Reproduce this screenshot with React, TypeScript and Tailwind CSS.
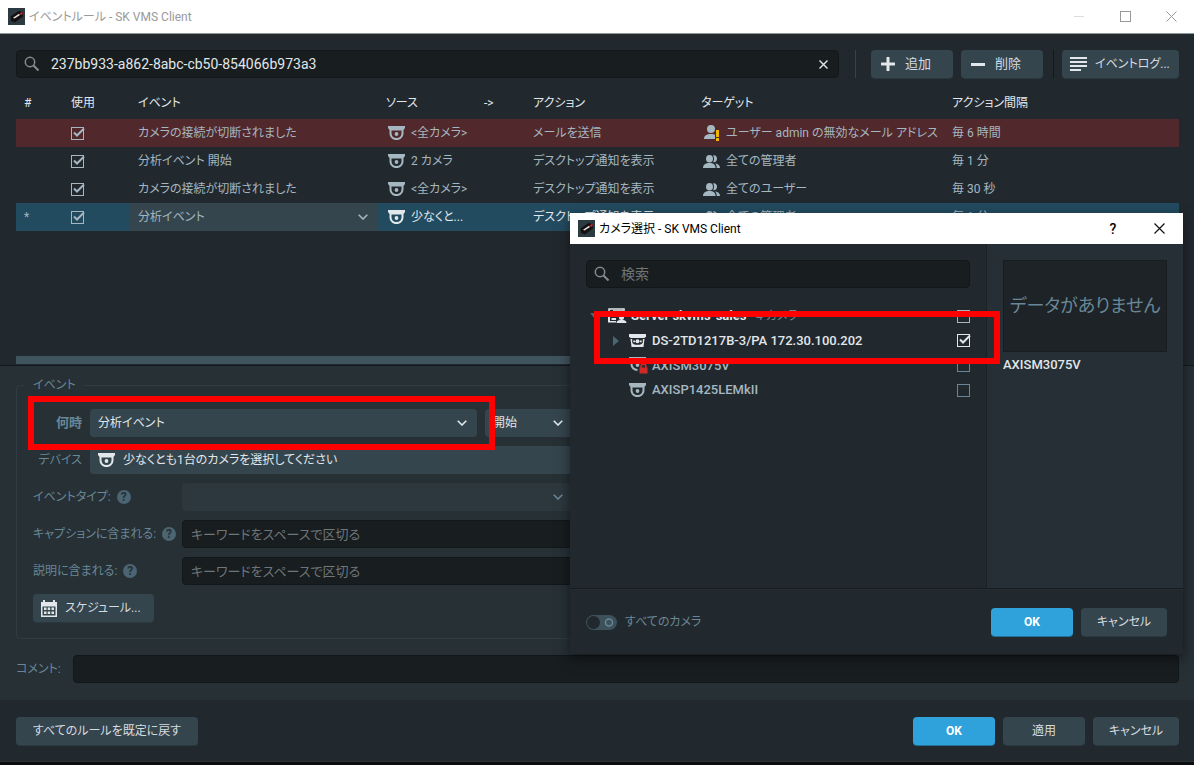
import type { ReactNode } from "react";
import { useState } from "react";

const btn = "flex h-7 items-center justify-center rounded-sm bg-[#35454d] text-[#d5dce0] shadow-[0_1px_0_#2b383f]";
const toolBtn = "flex h-7 items-center rounded-sm bg-[#35454d] text-[#d5dce0] shadow-[0_1px_0_#2b383f]";
const primaryBtn = "h-7 rounded-sm bg-[#2fa2db] font-bold text-white shadow-[0_1px_0_#25719a]";
const field = "h-7 min-w-0 rounded-sm border border-[#12171a] bg-[#181d1f] px-2 text-[#e1e7ea] placeholder:text-[#6f767a] outline-none";
const pick = "block h-7 w-full appearance-none rounded-sm bg-[#35454d] pr-7 pl-2 text-[#e1e7ea] outline-none";

const rules = [
  { mark: "", event: "カメラの接続が切断されました", source: "<全カメラ>", action: "メールを送信", target: "ユーザー admin の無効なメール アドレス", every: "毎 6 時間", state: "error" },
  { mark: "", event: "分析イベント 開始", source: "2 カメラ", action: "デスクトップ通知を表示", target: "全ての管理者", every: "毎 1 分", state: "" },
  { mark: "", event: "カメラの接続が切断されました", source: "<全カメラ>", action: "デスクトップ通知を表示", target: "全てのユーザー", every: "毎 30 秒", state: "" },
  { mark: "*", event: "分析イベント", source: "少なくと...", action: "デスクトップ通知を表示", target: "全ての管理者", every: "毎 1 分", state: "selected" },
];

function AppIcon() {
  return (
    <svg width="17" height="17" viewBox="0 0 17 17" className="shrink-0">
      <rect width="17" height="17" fill="#2c3a41" />
      <path d="M2.500 8.500 L10.500 3 L14.500 4 L15 8.500 L7 14.500 L3 13Z" fill="#141012" />
      <path d="M5 9.800 L11 5.800 L12 7 L6.500 10.500Z" fill="#e6e1df" />
      <path d="M12 5.200 L14.300 3.800 L14.500 6 L12.800 7Z" fill="#e0242c" />
    </svg>
  );
}

function SearchIcon() {
  return (
    <svg width="16" height="16" viewBox="0 0 16 16" fill="none" stroke="#858c90" className="absolute top-1.5 left-2">
      <circle cx="6" cy="6" r="4.700" strokeWidth="1.500" />
      <path d="M9.500 9.500 L14.500 14.500" strokeWidth="2" />
    </svg>
  );
}

function DomeIcon() {
  return (
    <svg width="17" height="14" viewBox="0 0 17 14" className="shrink-0">
      <path d="M0 0H17V2L15.500 4V7C15.500 11.300 12.500 14 8.500 14S1.500 11.300 1.500 7V4L0 2Z M3.500 4.500V7C3.500 10.200 5.500 12 8.500 12S13.500 10.200 13.500 7V4.500Z" fill="currentColor" fillRule="evenodd" />
      <circle cx="8.500" cy="8" r="1.900" fill="currentColor" />
    </svg>
  );
}

function LockedDomeIcon() {
  return (
    <svg width="19" height="17" viewBox="0 0 19 17" className="-mr-0.5 shrink-0">
      <path d="M0 0H17V2L15.500 4V6.500H13.500V4.500H3.500V7C3.500 10 5.500 11.800 8.500 12V14C4.500 14 1.500 11 1.500 7V4L0 2Z" fill="currentColor" />
      <circle cx="8.500" cy="8" r="1.900" fill="currentColor" />
      <path d="M12 11V9.800a2.500 2.500 0 0 1 5 0V11" fill="none" stroke="#cf2a2a" strokeWidth="1.600" />
      <rect x="10.500" y="10.500" width="8" height="6" fill="#cf2a2a" />
    </svg>
  );
}

function MultiCameraIcon() {
  return (
    <svg width="17" height="13" viewBox="0 0 17 13" className="shrink-0">
      <path d="M0 0H17V2.500L15.500 4H1.500L0 2.500Z" fill="currentColor" />
      <path d="M1.500 5H3.200V8.500C3.800 10 5.500 10.800 8.500 10.800S13.200 10 13.800 8.500V5H15.500L14.500 13H2.500Z" fill="currentColor" />
      <circle cx="8.500" cy="7.300" r="2" fill="currentColor" />
      <path d="M4.300 6.500h1.700v1.700H4.300zM11 6.500h1.700v1.700H11z" fill="currentColor" />
    </svg>
  );
}

function ServerIcon() {
  return (
    <svg width="19" height="15" viewBox="0 0 19 15" className="-mr-0.5 shrink-0">
      <rect x="1" y="1" width="15" height="5" fill="none" stroke="currentColor" strokeWidth="1.500" />
      <path d="M5 3.500h10" stroke="currentColor" strokeWidth="2.500" />
      <path d="M0 7.500H10V9H2V13H8V14.500H0Z" fill="currentColor" />
      <path d="M3.500 11H8" stroke="currentColor" strokeWidth="2" />
      <circle cx="13.500" cy="9.500" r="2.500" fill="currentColor" />
      <path d="M8.500 15C8.500 12.500 11 12 13.500 12S18.500 12.500 18.500 15Z" fill="currentColor" />
    </svg>
  );
}

function UserWarningIcon() {
  return (
    <svg width="17" height="16" viewBox="0 0 17 16" className="shrink-0">
      <circle cx="8" cy="4" r="4" fill="currentColor" />
      <path d="M1 14C1 10.500 3.500 9 8 9C10 9 11.300 9.300 12 9.800V14Z" fill="currentColor" />
      <path d="M13 5h3v7h-3zM13 13h3v3h-3z" fill="#f2b500" />
    </svg>
  );
}

function UsersIcon() {
  return (
    <svg width="17" height="13" viewBox="0 0 17 13" className="shrink-0">
      <ellipse cx="6.500" cy="3.800" rx="3.500" ry="3.800" fill="currentColor" />
      <path d="M0 13C0 9.500 2.500 8 6.500 8S12.500 9.500 12.500 13Z" fill="currentColor" />
      <path d="M10 0.200C13 -0.200 14.200 2 14 4C13.800 6.500 12 7.500 10 7.200C11.300 5.500 11.500 2.200 10 0.200ZM12 8.200C15.500 9 17 10.200 17 13H13.700C13.700 11 13.200 9.300 12 8.200Z" fill="currentColor" />
    </svg>
  );
}

function Chevron() {
  return (
    <svg width="10" height="6" viewBox="0 0 10 6" fill="none" stroke="currentColor" strokeWidth="1.600" className="pointer-events-none absolute top-1/2 right-2.5 -translate-y-1/2">
      <path d="M0.700 0.700 L5 5 L9.300 0.700" />
    </svg>
  );
}

function Check({ label, defaultChecked = false }: { label: string; defaultChecked?: boolean }) {
  return (
    <span className="relative block h-[13px] w-[13px]">
      <input type="checkbox" aria-label={label} defaultChecked={defaultChecked} className="peer block h-[13px] w-[13px] appearance-none border border-current" />
      <svg width="15" height="13" viewBox="0 0 15 13" fill="none" stroke="currentColor" strokeWidth="2" className="pointer-events-none absolute top-0 left-0 hidden peer-checked:block">
        <path d="M3 5.500 L6 8.500 L13 1.500" />
      </svg>
    </span>
  );
}

function Help() {
  return (
    <button aria-label="ヘルプ" className="h-3.5 w-3.5 rounded-full bg-[#4b6572] text-center text-xs leading-3.5 font-bold text-[#263035]">
      ?
    </button>
  );
}

function KeywordRow({ id, label, children }: { id: string; label: string; children: ReactNode }) {
  return (
    <div className="flex items-center">
      <div className="flex w-[149px] shrink-0 items-center gap-1.5 whitespace-nowrap">
        <label htmlFor={id}>{label}</label>
        <Help />
      </div>
      {children}
    </div>
  );
}

function CameraDialog() {
  return (
    <section role="dialog" aria-label="カメラ選択" className="absolute top-[213px] right-[11px] w-[613px] bg-[#22292e] shadow-[0_4px_12px_rgba(0,0,0,0.5)]">
      <header className="flex h-[31px] items-center bg-white pl-2 text-xs text-black">
        <AppIcon />
        <h2 className="ml-1 flex-1">カメラ選択 - SK VMS Client</h2>
        <button aria-label="ヘルプ" className="w-[46px] text-sm font-medium">?</button>
        <button aria-label="閉じる" className="flex w-[47px] justify-center">
          <svg width="11" height="11" viewBox="0 0 11 11" stroke="#111" strokeWidth="1.200">
            <path d="M0.500 0.500 L10.500 10.500 M10.500 0.500 L0.500 10.500" />
          </svg>
        </button>
      </header>
      <div className="flex h-[345px] border-b border-[#171c1f]">
        <div className="flex-1 px-4 pt-4">
          <div className="relative">
            <SearchIcon />
            <input aria-label="検索" placeholder="検索" className={`${field} w-full pl-[34px] text-sm`} />
          </div>
          <div className="relative mt-4 text-[13px] text-[#a5b7c0]">
            <ul>
              <li className="flex h-6 items-center gap-1.5 pl-1">
                <svg width="10" height="6" className="shrink-0"><path d="M0 0H10L5 6Z" fill="#4b6572" /></svg>
                <span className="flex flex-1 items-center gap-1.5 pl-0.5 text-[#e1e7ea]">
                  <ServerIcon />
                  <span><b className="font-bold">Server skvms-sales</b> <span className="text-xs text-[#698796]">- 4 カメラ</span></span>
                </span>
                <Check label="Server skvms-sales" />
              </li>
              <li className="flex h-[25px] items-center gap-2.5 pl-[27px] text-[#e1e7ea]">
                <svg width="6" height="10" className="shrink-0"><path d="M0 0V10L6 5Z" fill="#4b6572" /></svg>
                <span className="flex flex-1 items-center gap-1.5 font-medium">
                  <MultiCameraIcon />
                  DS-2TD1217B-3/PA 172.30.100.202
                </span>
                <Check label="DS-2TD1217B-3/PA" defaultChecked />
              </li>
              <li className="flex h-[25px] items-center pl-[43px] font-medium">
                <span className="flex flex-1 items-center gap-1.5"><LockedDomeIcon />AXISM3075V</span>
                <span className="text-[#698796]"><Check label="AXISM3075V" /></span>
              </li>
              <li className="flex h-6 items-center pl-[43px] font-medium">
                <span className="flex flex-1 items-center gap-1.5"><DomeIcon />AXISP1425LEMkII</span>
                <span className="text-[#698796]"><Check label="AXISP1425LEMkII" /></span>
              </li>
            </ul>
            <div className="pointer-events-none absolute top-[7px] -right-[30px] left-2 h-[53px] border-6 border-[#ff0000]" />
          </div>
        </div>
        <aside className="w-[197px] border-l border-[#1b2124] bg-[#262f35] p-4">
          <div className="flex h-[92px] items-center justify-center border border-[#181d20] bg-[#1d2326] text-lg whitespace-nowrap text-[#698796]">データがありません</div>
          <p className="mt-1 text-[13px] font-medium text-[#e1e7ea]">AXISM3075V</p>
        </aside>
      </div>
      <footer className="flex h-[65px] items-center gap-2 border-t border-[#262d33] px-4 text-xs">
        <label className="flex items-center gap-2 text-[#698796]">
          <input type="checkbox" role="switch" className="peer sr-only" />
          <svg width="31" height="15" viewBox="0 0 31 15">
            <rect width="31" height="15" rx="7.500" fill="#3d515b" />
            <circle cx="7.500" cy="7.500" r="6.500" fill="#22292e" />
            <circle cx="23" cy="7.500" r="3.500" fill="none" stroke="#698796" strokeWidth="1.500" />
          </svg>
          すべてのカメラ
        </label>
        <button className={`${primaryBtn} ml-auto w-[82px]`}>OK</button>
        <button className={`${btn} w-[86px]`}>キャンセル</button>
      </footer>
    </section>
  );
}

export default function App() {
  const [search, setSearch] = useState("237bb933-a862-8abc-cb50-854066b973a3");

  return (
    <div className="relative min-h-screen overflow-hidden bg-[#0b0c0d] font-[Roboto,'Noto_Sans_CJK_JP',sans-serif] text-xs [font-feature-settings:'palt']">
      <header className="flex h-[34px] items-center border-b border-[#8c9a9f] bg-white pl-2 text-[#999]">
        <AppIcon />
        <h1 className="ml-1 flex-1">イベントルール - SK VMS Client</h1>
        <button aria-label="最小化" className="flex w-[47px] justify-center"><span className="h-px w-2.5 bg-[#ddd]" /></button>
        <button aria-label="最大化" className="flex w-[47px] justify-center"><span className="h-[11px] w-[11px] border border-[#999]" /></button>
        <button aria-label="閉じる" className="flex w-[45px] justify-center">
          <svg width="11" height="11" viewBox="0 0 11 11" stroke="#999">
            <path d="M0.500 0.500 L10.500 10.500 M10.500 0.500 L0.500 10.500" />
          </svg>
        </button>
      </header>

      <main>
        {/* rule list */}
        <div className="h-[331px] bg-[#22292e] pt-4 pr-[15px] pl-4">
          <div className="flex items-center">
            <div className="relative flex-1">
              <SearchIcon />
              <input aria-label="検索" value={search} onChange={(e) => setSearch(e.target.value)} className={`${field} w-full pl-[34px] text-sm`} />
              <button aria-label="クリア" onClick={() => setSearch("")} className="absolute top-2.5 right-[11px]">
                <svg width="9" height="9" viewBox="0 0 9 9" stroke="#e1e7ea" strokeWidth="1.400">
                  <path d="M0.500 0.500 L8.500 8.500 M8.500 0.500 L0.500 8.500" />
                </svg>
              </button>
            </div>
            <span className="mr-[15px] ml-4 h-7 w-px bg-[#37434a]" />
            <button className={`${toolBtn} w-[82px] gap-2.5 pl-2.5 text-[13px]`}>
              <svg width="14" height="14"><path d="M5.500 0h3v5.500H14v3H8.500V14h-3V8.500H0v-3h5.500Z" fill="#e1e7ea" /></svg>
              追加
            </button>
            <button className={`${toolBtn} ml-2 w-[82px] gap-2.5 pl-2.5 text-[13px]`}>
              <svg width="14" height="3"><path d="M0 0h14v3H0Z" fill="#e1e7ea" /></svg>
              削除
            </button>
            <span className="mr-2 ml-2.5 h-7 w-px bg-[#15191c]" />
            <button className={`${toolBtn} w-[117px] gap-2 pl-2`}>
              <svg width="17" height="15"><path d="M0 1h17M0 5h17M0 9h17M0 13h11" stroke="#e1e7ea" strokeWidth="2" /></svg>
              イベントログ...
            </button>
          </div>

          <table className="mt-[9px] w-full table-fixed text-left text-[#a5b7c0]">
            <colgroup>
              <col className="w-[47px]" />
              <col className="w-[67px]" />
              <col className="w-[248px]" />
              <col className="w-[98px]" />
              <col className="w-[49px]" />
              <col className="w-[168px]" />
              <col className="w-[251px]" />
              <col />
            </colgroup>
            <thead>
              <tr className="h-8 text-[#e1e7ea] [&>th]:px-2 [&>th]:font-normal">
                <th>#</th>
                <th>使用</th>
                <th>イベント</th>
                <th>ソース</th>
                <th>{"->"}</th>
                <th>アクション</th>
                <th>ターゲット</th>
                <th>アクション間隔</th>
              </tr>
            </thead>
            <tbody>
              {rules.map((r, i) => {
                const selected = r.state === "selected";
                return (
                  <tr key={i} className={`h-7 whitespace-nowrap [&>td]:px-2 ${r.state === "error" ? "bg-[#51282c]" : ""} ${selected ? "bg-[#234b60]" : ""}`}>
                    <td>{r.mark}</td>
                    <td><Check label="使用" defaultChecked /></td>
                    {selected ? (
                      <td className="relative p-0!">
                        <select aria-label="イベント" className="block h-7 w-full appearance-none bg-[#35454d] pl-2 outline-none">
                          <option>{r.event}</option>
                        </select>
                        <Chevron />
                      </td>
                    ) : (
                      <td>{r.event}</td>
                    )}
                    <td className={`pl-2.5! ${selected ? "text-[#e1e7ea]" : ""}`}>
                      <span className="flex items-center gap-1.5"><DomeIcon />{r.source}</span>
                    </td>
                    <td />
                    <td className={selected ? "text-[#e1e7ea]" : ""}>{r.action}</td>
                    <td className="pl-2.5!">
                      <span className="flex items-center gap-1.5">{r.state === "error" ? <UserWarningIcon /> : <UsersIcon />}{r.target}</span>
                    </td>
                    <td>{r.every}</td>
                  </tr>
                );
              })}
            </tbody>
          </table>
          <div className="mt-[125px] h-2 bg-[#40545e]" />
        </div>

        {/* rule editor */}
        <div className="h-[335px] border-t border-[#14191c] bg-[#263035] pt-[11px] pr-[15px] pl-4 text-[#698796]">
          <fieldset className="flex h-[262px] w-1/2 flex-col gap-[9px] rounded-sm border border-[#2f3c43] pt-4 pr-6 pl-4">
            <legend className="-ml-2 px-2">イベント</legend>
            <div className="relative flex items-center gap-2">
              <label htmlFor="when" className="w-[49px] shrink-0 text-right text-[13px] font-bold">何時</label>
              <div className="relative w-[387px] shrink-0">
                <select id="when" className={pick}><option>分析イベント</option></select>
                <span className="text-[#e1e7ea]"><Chevron /></span>
              </div>
              <div className="relative flex-1 text-[#e1e7ea]">
                <select aria-label="状態" className={pick}><option>開始</option></select>
                <Chevron />
              </div>
              <div className="pointer-events-none absolute -inset-y-[13px] -left-[5px] w-[467px] border-6 border-[#ff0000]" />
            </div>
            <div className="flex items-center gap-2">
              <label htmlFor="device" className="w-[49px] shrink-0 text-right">デバイス</label>
              <button id="device" className="flex h-7 flex-1 items-center gap-2 rounded-sm bg-[#35454d] px-2 text-[#e1e7ea]">
                <DomeIcon />
                少なくとも1台のカメラを選択してください
              </button>
            </div>
            <KeywordRow id="type" label="イベントタイプ:">
              <div className="relative flex-1">
                <select id="type" disabled className="block h-7 w-full appearance-none rounded-sm bg-[#2c373e]" />
                <Chevron />
              </div>
            </KeywordRow>
            <KeywordRow id="caption" label="キャプションに含まれる:">
              <input id="caption" placeholder="キーワードをスペースで区切る" className={`${field} flex-1 text-[13px]`} />
            </KeywordRow>
            <KeywordRow id="description" label="説明に含まれる:">
              <input id="description" placeholder="キーワードをスペースで区切る" className={`${field} flex-1 text-[13px]`} />
            </KeywordRow>
            <button className={`${toolBtn} w-[121px] gap-2 self-start pl-2`}>
              <svg width="16" height="17" viewBox="0 0 16 17" fill="#e1e7ea">
                <path d="M2 0h2v2h8V0h2v2h2v15H0V2h2ZM1.500 6.500v9h13v-9Z" fillRule="evenodd" />
                <path d="M3 7.500h2.500v2.500H3zM6.700 7.500h2.500v2.500H6.700zM10.500 7.500H13v2.500h-2.500zM3 11.500h2.500v2.500H3zM6.700 11.500h2.500v2.500H6.700zM10.500 11.500H13v2.500h-2.500z" />
              </svg>
              スケジュール...
            </button>
          </fieldset>
          <div className="mt-4 flex items-center">
            <label htmlFor="comment" className="w-[57px] shrink-0">コメント:</label>
            <input id="comment" className={`${field} flex-1`} />
          </div>
        </div>
      </main>

      <footer className="flex h-[62px] items-center gap-2 border-b border-[#2e3336] bg-[#22292e] pr-[15px] pl-4">
        <button className={`${btn} mr-auto w-[182px]`}>すべてのルールを既定に戻す</button>
        <button className={`${primaryBtn} w-[82px]`}>OK</button>
        <button className={`${btn} w-[82px]`}>適用</button>
        <button className={`${btn} w-[86px]`}>キャンセル</button>
      </footer>

      <CameraDialog />
    </div>
  );
}
